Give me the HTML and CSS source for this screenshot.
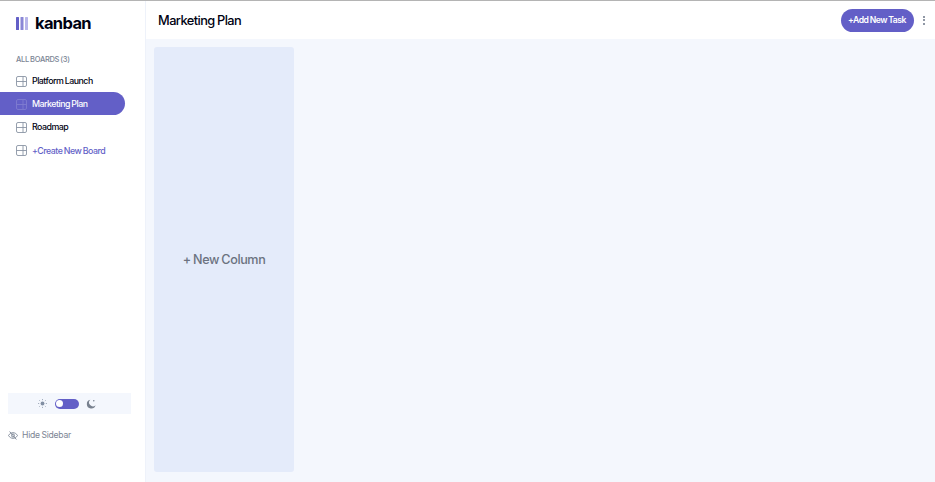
FILE: index.html
```html
<!DOCTYPE html>
<html lang="en">
<head>
<meta charset="utf-8">
<title>Kanban</title>
<link rel="stylesheet" href="styles.css">
</head>
<body>
<div class="app">
  <aside class="sidebar">
    <div class="logo">
      <svg class="logo-mark" width="12" height="13" viewBox="0 0 12 13"><rect x="0" width="3" height="13" rx="0.5" fill="#635fc7"/><rect x="4.5" width="3" height="13" rx="0.5" fill="#8a87d6"/><rect x="9" width="3" height="13" rx="0.5" fill="#b8b6ea"/></svg>
      <span class="logo-text">kanban</span>
    </div>
    <p class="boards-title">ALL BOARDS (3)</p>
    <nav class="boards">
      <a class="board"><svg class="board-icon" viewBox="0 0 11 11"><rect x=".5" y=".5" width="10" height="10" rx="1.5"/><path d="M.5 5.5h10M7 .5v10"/></svg>Platform Launch</a>
      <a class="board active"><svg class="board-icon" viewBox="0 0 11 11"><rect x=".5" y=".5" width="10" height="10" rx="1.5"/><path d="M.5 5.5h10M7 .5v10"/></svg>Marketing Plan</a>
      <a class="board"><svg class="board-icon" viewBox="0 0 11 11"><rect x=".5" y=".5" width="10" height="10" rx="1.5"/><path d="M.5 5.5h10M7 .5v10"/></svg>Roadmap</a>
      <a class="board create"><svg class="board-icon" viewBox="0 0 11 11"><rect x=".5" y=".5" width="10" height="10" rx="1.5"/><path d="M.5 5.5h10M7 .5v10"/></svg>+Create New Board</a>
    </nav>
    <div class="theme">
      <svg class="sun" width="9" height="9" viewBox="0 0 9 9"><circle cx="4.5" cy="4.5" r="1.9" fill="#828fa3"/><path d="M4.5 0v1.2M4.5 7.8V9M0 4.5h1.2M7.8 4.5H9M1.3 1.3l.8.8M6.9 6.9l.8.8M1.3 7.7l.8-.8M6.9 2.1l.8-.8" stroke="#828fa3" stroke-width=".7"/></svg>
      <span class="toggle"><span class="knob"></span></span>
      <svg class="moon" width="10" height="10" viewBox="0 0 9 9"><path d="M3.9.6A4 4 0 1 0 8.6 5.6 3.2 3.2 0 0 1 3.9.6Z" fill="#78818f"/><circle cx="7" cy="1.5" r=".7" fill="#78818f"/></svg>
    </div>
    <div class="hide">
      <svg width="10" height="9" viewBox="0 0 10 9" fill="none" stroke="#7b8494" stroke-width=".9"><path d="M.5 4.5C1.6 2.6 3.3 1.7 5 1.7S8.4 2.6 9.5 4.5C8.4 6.4 6.7 7.3 5 7.3S1.6 6.4.5 4.5Z"/><circle cx="5" cy="4.5" r="1.5"/><path d="M1.6.5l6.8 8"/></svg>
      <span>Hide Sidebar</span>
    </div>
  </aside>
  <div class="content">
    <header class="header">
      <h1 class="title">Marketing Plan</h1>
      <div class="actions">
        <button class="add-task">+Add New Task</button>
        <span class="menu"><i></i><i></i><i></i></span>
      </div>
    </header>
    <main class="board-area">
      <div class="new-column">+ New Column</div>
    </main>
  </div>
</div>
</body>
</html>
```

FILE: styles.css
```css
* { box-sizing: border-box; }
html, body { margin: 0; height: 100%; }
body { font-family: "Inter", "Liberation Sans", sans-serif; background: #fff; overflow: hidden; }
.app { display: flex; height: 482px; border-top: 1px solid #b4b4b4; }
.sidebar { width: 146px; flex: none; display: flex; flex-direction: column; background: #fff; border-right: 1px solid #eef2fa; }
.logo { display: flex; align-items: center; gap: 7px; height: 20px; margin: 12px 0 0 16px; }
.logo-mark { display: block; }
.logo-text { font-size: 16.5px; font-weight: 700; color: #000112; letter-spacing: -0.65px; }
.boards-title { margin: 21px 0 0 16px; height: 12px; line-height: 12px; font-size: 7.5px; font-weight: 500; color: #7b8494; letter-spacing: -0.3px; word-spacing: -0.5px; }
.boards { display: flex; flex-direction: column; margin-top: 3px; }
.board { display: flex; align-items: center; gap: 5px; width: 125px; height: 23.2px; padding-left: 16px; font-size: 8.8px; font-weight: 500; color: #000112; letter-spacing: -0.5px; word-spacing: -0.4px; border-radius: 0 12px 12px 0; }
.board-icon { width: 11px; height: 11px; flex: none; margin-top: 1px; fill: none; stroke: #8b95a5; stroke-width: .9; }
.board.active { background: #635fc7; color: #fff; }
.board.active .board-icon { stroke: #7f7cd0; }
.board.create { color: #635fc7; }
.theme { display: flex; align-items: center; justify-content: center; gap: 7.5px; height: 21px; margin: auto 14px 0 8px; padding-right: 5px; background: #f4f7fd; }
.toggle { display: block; width: 24px; height: 10px; padding: 1.5px; border-radius: 5px; background: #635fc7; }
.knob { display: block; width: 7px; height: 7px; border-radius: 50%; background: #fff; }
.hide { display: flex; align-items: center; gap: 4px; height: 12px; margin: 15px 0 41px 8px; font-size: 8.6px; font-weight: 400; color: #7b8494; letter-spacing: -0.25px; word-spacing: -0.4px; }
.content { flex: 1; display: flex; flex-direction: column; min-width: 0; }
.header { display: flex; align-items: center; justify-content: space-between; height: 38px; padding: 0 10px 0 12px; background: #fff; }
.title { margin: 0; font-size: 12.8px; font-weight: 500; color: #000112; letter-spacing: -0.55px; word-spacing: -0.6px; }
.actions { display: flex; align-items: center; gap: 9.5px; }
.add-task { height: 23px; width: 73px; padding: 0; border: 0; border-radius: 12px; background: #635fc7; color: #fff; font: 600 8.6px "Inter", "Liberation Sans", sans-serif; letter-spacing: -0.45px; word-spacing: -0.5px; }
.menu { display: flex; flex-direction: column; gap: 1.5px; width: 2px; }
.menu i { display: block; width: 2px; height: 2px; border-radius: 50%; background: #6b7687; }
.board-area { flex: 1; padding: 8px; background: #f4f7fd; }
.new-column { display: flex; align-items: center; justify-content: center; width: 140px; height: 425px; background: #e4ebfa; border-radius: 3px; font-size: 12.6px; font-weight: 500; color: #6b7280; letter-spacing: -0.4px; word-spacing: -0.6px; }
```
